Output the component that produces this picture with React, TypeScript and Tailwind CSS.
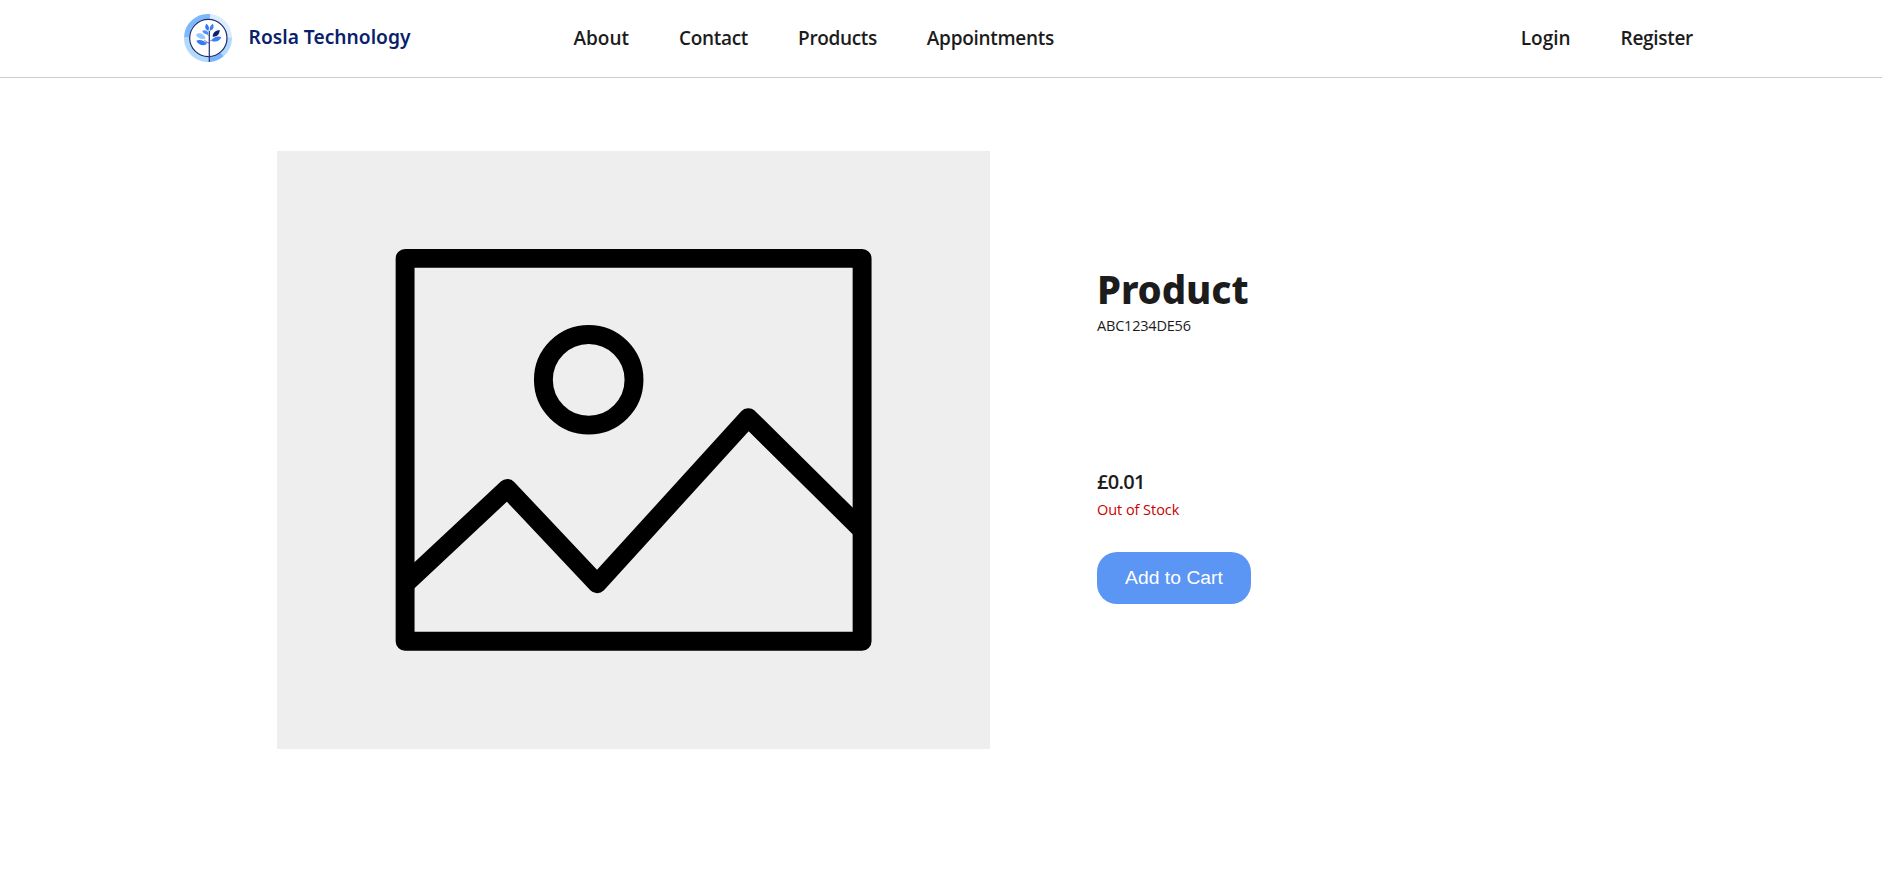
function Logo() {
  return (
    <svg viewBox="0 0 144 144" className="size-12 shrink-0" fill="none" aria-hidden="true">
      <circle cx="72" cy="72" r="62" fill="#fff" />
      <g strokeWidth="15">
        <path d="M78 7.8A64.5 64.5 0 0 1 136.5 70" stroke="#dbecfe" />
        <path d="M136.5 70A64.5 64.5 0 0 1 114 121" stroke="#b2dafd" />
        <path d="M114 121A64.5 64.5 0 0 1 76 136.4" stroke="#76b3fb" />
        <path d="M76 136.4A64.5 64.5 0 0 1 7.5 70" stroke="#b2dafd" />
        <path d="M7.5 70A64.5 64.5 0 0 1 78 7.8" stroke="#7db8fb" />
      </g>
      <circle cx="73" cy="72" r="56" stroke="#1c2c70" strokeWidth="3.6" />
      <path d="M76 50V144" stroke="#33437f" strokeWidth="4" />
      <path d="M76 88L60 78M76 88L62 84M76 82L92 74M76 66L66 58" stroke="#5a6a9c" strokeWidth="2" />
      <path d="M73 50C62 46 62 36 67 29C75 35 77 42 73 50Z" fill="#2f76f2" />
      <path d="M78 50C75 40 80 33 87 29C91 39 88 47 78 50Z" fill="#3b82f6" />
      <path d="M55 51C62 47 70 49 74 59C66 63 58 59 55 51Z" fill="#4c8ff8" />
      <path d="M36 62C43 54 59 56 65 73C53 78 40 72 36 62Z" fill="#93c6fc" />
      <path d="M37 80C47 75 61 79 69 90C58 97 43 93 37 80Z" fill="#3478f5" />
      <path d="M86 68C86 54 97 49 107 48C107 61 98 69 86 68Z" fill="#0f2070" />
      <path d="M82 80C89 67 102 65 112 69C108 81 95 86 82 80Z" fill="#3b7df5" />
    </svg>
  );
}

function PlaceholderImage() {
  return (
    <svg viewBox="0 0 713 598" className="block h-[598px] w-[713px] shrink-0 bg-[#eeeeee]" fill="none" stroke="#000" strokeWidth="18.9" strokeLinejoin="round" role="img">
      <rect x="128.1" y="107.4" width="457" height="382.8" />
      <circle cx="311.7" cy="228.8" r="45.3" />
      <path d="M128.1 433L230.3 337.4L320.2 432.7L471.3 266.6L585.1 379.2" />
    </svg>
  );
}

export default function App() {
  return (
    <div className="min-h-screen bg-white font-['Open_Sans',sans-serif] text-[#1c1c1c]">
      <header className="flex h-[78px] items-center border-b border-[#cccccc] pr-[189px] pl-[184px] text-[19px] font-semibold whitespace-nowrap">
        <a href="#" className="flex w-[389.4px] items-center gap-[16.6px] pb-px font-['Noto_Sans',sans-serif] text-[19.2px] text-[#0a1f6b]">
          <Logo />
          <span className="pb-0.5">Rosla Technology</span>
        </a>
        <nav className="flex flex-1 gap-[50px]">
          <a href="#" className="hover:text-blue-700">About</a>
          <a href="#" className="tracking-[-0.3px] hover:text-blue-700">Contact</a>
          <a href="#" className="tracking-[-0.35px] hover:text-blue-700">Products</a>
          <a href="#" className="tracking-[-0.3px] hover:text-blue-700">Appointments</a>
        </nav>
        <nav className="flex gap-[50px]">
          <a href="#" className="hover:text-blue-700">Login</a>
          <a href="#" className="tracking-[-0.3px] hover:text-blue-700">Register</a>
        </nav>
      </header>
      <main className="flex gap-[107px] pt-[73px] pl-[277px]">
        <PlaceholderImage />
        <section className="flex flex-col items-start pt-[112px]">
          <h1 className="font-['Noto_Sans',sans-serif] text-[38.4px] leading-[52px] font-extrabold tracking-[-0.1px]">Product</h1>
          <p className="mt-px text-[14.5px] leading-5 tracking-[-0.2px]">ABC1234DE56</p>
          <p className="mt-[132px] text-[20px] leading-7 font-semibold tracking-[-0.7px]">£0.01</p>
          <p className="mt-1 text-[14.5px] leading-5 tracking-[-0.05px] text-[#cc0000]">Out of Stock</p>
          <button className="mt-8 flex h-[52px] w-[154px] items-center justify-center rounded-[20px] bg-[#5c96f5] font-['Liberation_Sans',sans-serif] text-[19.2px] tracking-[0.08px] text-white">Add to Cart</button>
        </section>
      </main>
    </div>
  );
}
